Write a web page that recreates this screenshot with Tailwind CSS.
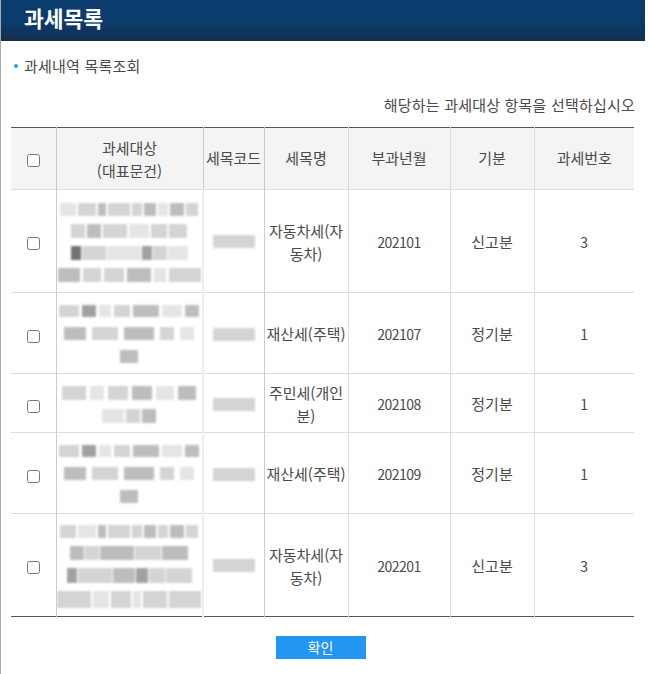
<!DOCTYPE html>
<html lang="ko">
<head>
    <meta charset="UTF-8">
    <title>과세목록</title>
    <script src="https://cdn.jsdelivr.net/npm/@tailwindcss/browser@4"></script>
</head>
<body class="bg-white text-[#4a4a4a] text-[15px] font-['Noto_Sans_CJK_KR','Noto_Sans',sans-serif]">
    <div class="w-[650px] h-[674px] overflow-hidden border-l border-[#aaa]">
        <!-- 타이틀 -->
        <div class="w-[644px] h-[41px] pl-[23px] pb-[4px] flex items-center bg-gradient-to-b from-[#0a3c6d] via-[#0a3c6d] to-[#132f4f]">
            <h1 class="text-[21.5px] font-bold text-white">과세목록</h1>
        </div>

        <div class="w-[634px] pl-[10px]">
            <div class="mt-[14px] h-[22px] flex items-center gap-[6px] pl-[3px]">
                <span class="w-[4px] h-[4px] rounded-full bg-[#2b9de8]"></span>
                <span class="tracking-[0.2px]">과세내역 목록조회</span>
            </div>
            <p class="mt-[17px] h-[22px] leading-[22px] text-right tracking-[0.2px]">해당하는 과세대상 항목을 선택하십시오</p>

            <!-- 목록 -->
            <table class="mt-[11px] w-[623px] table-fixed border-collapse border-y border-y-[#555] text-center">
                <colgroup>
                    <col class="w-[45px]"><col class="w-[147px]"><col class="w-[61px]"><col class="w-[84px]"><col class="w-[102px]"><col class="w-[84px]"><col class="w-[100px]">
                </colgroup>
                <thead class="bg-[#f4f4f4]">
                    <tr class="h-[62px] border-b border-[#ddd]">
                        <th class="font-normal"><input type="checkbox" class="align-middle"></th>
                        <th class="font-normal leading-[23px] border-l border-[#ccc]">과세대상<br>(대표문건)</th>
                        <th class="font-normal border-l border-[#ccc]">세목코드</th>
                        <th class="font-normal border-l border-[#ccc]">세목명</th>
                        <th class="font-normal border-l border-[#ddd]">부과년월</th>
                        <th class="font-normal border-l border-[#ddd]">기분</th>
                        <th class="font-normal border-l border-[#ddd]">과세번호</th>
                    </tr>
                </thead>
                <tbody class="[&_td]:pt-[2px]">
                    <tr class="h-[103px] border-b border-[#ddd]">
                        <td><input type="checkbox" class="align-middle"></td>
                        <td class="border-l border-[#ccc]">
                            <div class="flex flex-col items-center gap-[8px] blur-[1px]">
                                <div class="flex gap-[2px] h-[13px]"><i class="w-[16px] bg-neutral-200"></i><i class="w-[18px] bg-neutral-300"></i><i class="w-[8px] bg-neutral-400/70"></i><i class="w-[22px] bg-neutral-300"></i><i class="w-[10px] bg-neutral-300"></i><i class="w-[12px] bg-neutral-400/70"></i><i class="w-[10px] bg-neutral-200"></i><i class="w-[14px] bg-neutral-400/70"></i><i class="w-[12px] bg-neutral-300"></i></div>
                                <div class="flex gap-[2px] h-[14px]"><i class="w-[14px] bg-neutral-300"></i><i class="w-[14px] bg-neutral-400/70"></i><i class="w-[24px] bg-neutral-300"></i><i class="w-[20px] bg-neutral-200"></i><i class="w-[16px] bg-neutral-300"></i><i class="w-[18px] bg-neutral-300"></i></div>
                                <div class="flex gap-[1px] h-[14px]"><i class="w-[10px] bg-neutral-500"></i><i class="w-[24px] bg-neutral-300"></i><i class="w-[34px] bg-neutral-200"></i><i class="w-[10px] bg-neutral-400"></i><i class="w-[14px] bg-neutral-300"></i><i class="w-[20px] bg-neutral-200"></i></div>
                                <div class="flex gap-[3px] h-[14px]"><i class="w-[22px] bg-neutral-400/70"></i><i class="w-[18px] bg-neutral-300"></i><i class="w-[20px] bg-neutral-300"></i><i class="w-[24px] bg-neutral-400/70"></i><i class="w-[12px] bg-neutral-200"></i><i class="w-[32px] bg-neutral-300"></i></div>
                            </div>
                        </td>
                        <td class="border-l-2 border-[#efefef]"><div class="mx-auto mb-[1px] w-[42px] h-[13px] bg-neutral-300 blur-[1px]"></div></td>
                        <td class="border-l border-[#ccc] leading-[23px]">자동차세(자<br>동차)</td>
                        <td class="border-l border-[#ddd] text-[14px] tracking-[-0.5px]">202101</td>
                        <td class="border-l border-[#ddd]">신고분</td>
                        <td class="border-l border-[#ddd] text-[14px]">3</td>
                    </tr>
                    <tr class="h-[81px] border-b border-[#ddd]">
                        <td><input type="checkbox" class="align-middle mt-[2px]"></td>
                        <td class="border-l border-[#ccc]">
                            <div class="flex flex-col items-center gap-[10px] blur-[1px]">
                                <div class="flex gap-[3px] h-[12px]"><i class="w-[20px] bg-neutral-300"></i><i class="w-[14px] bg-neutral-400"></i><i class="w-[12px] bg-neutral-200"></i><i class="w-[16px] bg-neutral-300"></i><i class="w-[26px] bg-neutral-400/70"></i><i class="w-[20px] bg-neutral-200"></i><i class="w-[14px] bg-neutral-400/70"></i></div>
                                <div class="flex gap-[6px] h-[13px]"><i class="w-[22px] bg-neutral-400/70"></i><i class="w-[26px] bg-neutral-300"></i><i class="w-[30px] bg-neutral-400/70"></i><i class="w-[14px] bg-neutral-300"></i><i class="w-[14px] bg-neutral-200"></i></div>
                                <div class="w-[18px] h-[13px] bg-neutral-400/70"></div>
                            </div>
                        </td>
                        <td class="border-l-2 border-[#efefef]"><div class="mx-auto w-[42px] h-[13px] bg-neutral-300 blur-[1px]"></div></td>
                        <td class="border-l border-[#ccc]">재산세(주택)</td>
                        <td class="border-l border-[#ddd] text-[14px] tracking-[-0.5px]">202107</td>
                        <td class="border-l border-[#ddd]">정기분</td>
                        <td class="border-l border-[#ddd] text-[14px]">1</td>
                    </tr>
                    <tr class="h-[59px] border-b border-[#ddd]">
                        <td><input type="checkbox" class="align-middle mt-[2px]"></td>
                        <td class="border-l border-[#ccc]">
                            <div class="flex flex-col items-center gap-[9px] blur-[1px]">
                                <div class="flex gap-[4px] h-[14px]"><i class="w-[24px] bg-neutral-300"></i><i class="w-[14px] bg-neutral-200"></i><i class="w-[20px] bg-neutral-300"></i><i class="w-[20px] bg-neutral-400/70"></i><i class="w-[18px] bg-neutral-200"></i><i class="w-[18px] bg-neutral-400/70"></i></div>
                                <div class="flex gap-[2px] h-[14px]"><i class="w-[22px] bg-neutral-200"></i><i class="w-[14px] bg-neutral-300"></i><i class="w-[14px] bg-neutral-400/70"></i></div>
                            </div>
                        </td>
                        <td class="border-l-2 border-[#efefef]"><div class="mx-auto w-[42px] h-[13px] bg-neutral-300 blur-[1px]"></div></td>
                        <td class="border-l border-[#ccc] leading-[23px]">주민세(개인<br>분)</td>
                        <td class="border-l border-[#ddd] text-[14px] tracking-[-0.5px]">202108</td>
                        <td class="border-l border-[#ddd]">정기분</td>
                        <td class="border-l border-[#ddd] text-[14px]">1</td>
                    </tr>
                    <tr class="h-[81px] border-b border-[#ddd]">
                        <td><input type="checkbox" class="align-middle mt-[2px]"></td>
                        <td class="border-l border-[#ccc]">
                            <div class="flex flex-col items-center gap-[10px] blur-[1px]">
                                <div class="flex gap-[3px] h-[12px]"><i class="w-[20px] bg-neutral-300"></i><i class="w-[14px] bg-neutral-400"></i><i class="w-[12px] bg-neutral-200"></i><i class="w-[16px] bg-neutral-300"></i><i class="w-[26px] bg-neutral-400/70"></i><i class="w-[20px] bg-neutral-200"></i><i class="w-[14px] bg-neutral-400/70"></i></div>
                                <div class="flex gap-[6px] h-[13px]"><i class="w-[22px] bg-neutral-400/70"></i><i class="w-[26px] bg-neutral-300"></i><i class="w-[30px] bg-neutral-400/70"></i><i class="w-[14px] bg-neutral-300"></i><i class="w-[14px] bg-neutral-200"></i></div>
                                <div class="w-[18px] h-[13px] bg-neutral-400/70"></div>
                            </div>
                        </td>
                        <td class="border-l-2 border-[#efefef]"><div class="mx-auto w-[42px] h-[13px] bg-neutral-300 blur-[1px]"></div></td>
                        <td class="border-l border-[#ccc]">재산세(주택)</td>
                        <td class="border-l border-[#ddd] text-[14px] tracking-[-0.5px]">202109</td>
                        <td class="border-l border-[#ddd]">정기분</td>
                        <td class="border-l border-[#ddd] text-[14px]">1</td>
                    </tr>
                    <tr class="h-[103px]">
                        <td><input type="checkbox" class="align-middle"></td>
                        <td class="border-l border-[#ccc]">
                            <div class="flex flex-col items-center gap-[8px] blur-[1px]">
                                <div class="flex gap-[2px] h-[13px]"><i class="w-[16px] bg-neutral-300"></i><i class="w-[18px] bg-neutral-200"></i><i class="w-[8px] bg-neutral-400/70"></i><i class="w-[22px] bg-neutral-300"></i><i class="w-[10px] bg-neutral-300"></i><i class="w-[12px] bg-neutral-400/70"></i><i class="w-[10px] bg-neutral-300"></i><i class="w-[14px] bg-neutral-400/70"></i><i class="w-[12px] bg-neutral-300"></i></div>
                                <div class="flex gap-[1px] h-[14px]"><i class="w-[14px] bg-neutral-400/70"></i><i class="w-[14px] bg-neutral-300"></i><i class="w-[34px] bg-neutral-400/70"></i><i class="w-[26px] bg-neutral-300"></i><i class="w-[26px] bg-neutral-400/70"></i></div>
                                <div class="flex gap-[1px] h-[15px]"><i class="w-[10px] bg-neutral-400"></i><i class="w-[34px] bg-neutral-300"></i><i class="w-[22px] bg-neutral-400/70"></i><i class="w-[12px] bg-neutral-400"></i><i class="w-[16px] bg-neutral-300"></i><i class="w-[26px] bg-neutral-300"></i></div>
                                <div class="flex gap-[2px] h-[17px]"><i class="w-[34px] bg-neutral-300"></i><i class="w-[16px] bg-neutral-200"></i><i class="w-[20px] bg-neutral-300"></i><i class="w-[8px] bg-neutral-200"></i><i class="w-[24px] bg-neutral-300"></i><i class="w-[32px] bg-neutral-300"></i></div>
                            </div>
                        </td>
                        <td class="border-l-2 border-[#efefef]"><div class="mx-auto mb-[1px] w-[42px] h-[13px] bg-neutral-300 blur-[1px]"></div></td>
                        <td class="border-l border-[#ccc] leading-[23px]">자동차세(자<br>동차)</td>
                        <td class="border-l border-[#ddd] text-[14px] tracking-[-0.5px]">202201</td>
                        <td class="border-l border-[#ddd]">신고분</td>
                        <td class="border-l border-[#ddd] text-[14px]">3</td>
                    </tr>
                </tbody>
            </table>

            <div class="mt-[19px] flex justify-center pr-[5px]">
                <button class="w-[90px] h-[23px] bg-[#2196f3] text-white text-[14px] leading-[23px]">확인</button>
            </div>
        </div>
    </div>
</body>
</html>
